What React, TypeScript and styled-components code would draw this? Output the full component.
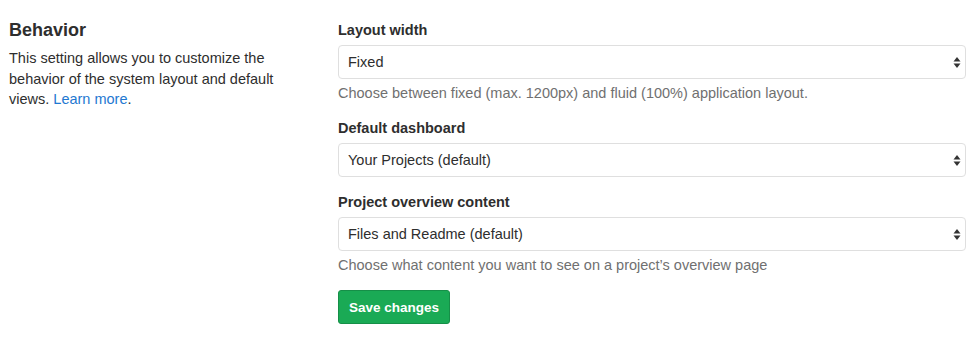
import React, {useState} from "react";
import styled, {createGlobalStyle} from "styled-components";

const GlobalStyle = createGlobalStyle`
  body {
    margin: 0;
    background: #fff;
    font-family: "Liberation Sans", Arial, sans-serif;
    color: #2e2e2e;
  }
`

type SelectFieldPropsType = {
  label: string
  options: string[]
  help?: string
};

const SelectField = (props: SelectFieldPropsType) => {
  const [value, setValue] = useState(props.options[0])
  return (
    <FieldGroup>
      <FieldLabel>{props.label}</FieldLabel>
      <SelectWrapper>
        <Select value={value} onChange={(e) => setValue(e.target.value)}>
          {props.options.map((o) => (
            <option key={o} value={o}>{o}</option>
          ))}
        </Select>
        <Arrows width="8" height="13" viewBox="0 0 8 13">
          <path d="M4 1 L7.5 5.5 L0.5 5.5 Z" fill="#333"/>
          <path d="M4 12 L7.5 7.5 L0.5 7.5 Z" fill="#333"/>
        </Arrows>
      </SelectWrapper>
      {props.help && <HelpText>{props.help}</HelpText>}
    </FieldGroup>
  );
};

export default function App() {
  return (
    <>
      <GlobalStyle/>
      <Settings>
        <Intro>
          <Title>Behavior</Title>
          <Description>
            This setting allows you to customize the behavior of the system layout and default
            views.{" "}<Link href="#">Learn more</Link>.
          </Description>
        </Intro>
        <Form>
          <SelectField
            label="Layout width"
            options={["Fixed", "Fluid"]}
            help="Choose between fixed (max. 1200px) and fluid (100%) application layout."
          />
          <SelectField
            label="Default dashboard"
            options={["Your Projects (default)", "Starred Projects"]}
          />
          <SelectField
            label="Project overview content"
            options={["Files and Readme (default)", "Readme"]}
            help="Choose what content you want to see on a project’s overview page"
          />
          <SaveButton type="button">Save changes</SaveButton>
        </Form>
      </Settings>
    </>
  );
}

const Settings = styled.div`
  display: grid;
  grid-template-columns: 329px 1fr;
  padding: 20px 13px 0 9px;
`
const Intro = styled.div`
  display: flex;
  flex-direction: column;
`
const Title = styled.h4`
  margin: -1px 0 7px;
  font-size: 18px;
  line-height: 22px;
  font-weight: 700;
  color: #2e2e2e;
`
const Description = styled.p`
  margin: 0;
  width: 290px;
  font-size: 14.5px;
  line-height: 20.5px;
  color: #2e2e2e;
`
const Link = styled.a`
  color: #1f78d1;
  text-decoration: none;
`
const Form = styled.div`
  display: flex;
  flex-direction: column;
`
const FieldGroup = styled.div`
  display: flex;
  flex-direction: column;
  margin-bottom: 15px;
`
const FieldLabel = styled.label`
  font-size: 14.5px;
  line-height: 20px;
  font-weight: 700;
  margin-bottom: 5px;
`
const SelectWrapper = styled.div`
  position: relative;
`
const Select = styled.select`
  appearance: none;
  width: 100%;
  height: 34px;
  padding: 0 30px 0 9px;
  border: 1px solid #dfdfdf;
  border-radius: 4px;
  background: #fff;
  font-family: "Liberation Sans", Arial, sans-serif;
  font-size: 14.5px;
  color: #2e2e2e;
  outline: none;
`
const Arrows = styled.svg`
  position: absolute;
  right: 5px;
  top: 11px;
  pointer-events: none;
`
const HelpText = styled.p`
  margin: 4px 0 0;
  font-size: 14.5px;
  line-height: 20px;
  color: #707070;
`
const SaveButton = styled.button`
  align-self: flex-start;
  height: 34px;
  padding: 0 10px;
  border: 1px solid #168f48;
  border-radius: 3px;
  background: #1aaa55;
  color: #fff;
  font-family: "Liberation Sans", Arial, sans-serif;
  font-size: 13.5px;
  font-weight: 700;
`
